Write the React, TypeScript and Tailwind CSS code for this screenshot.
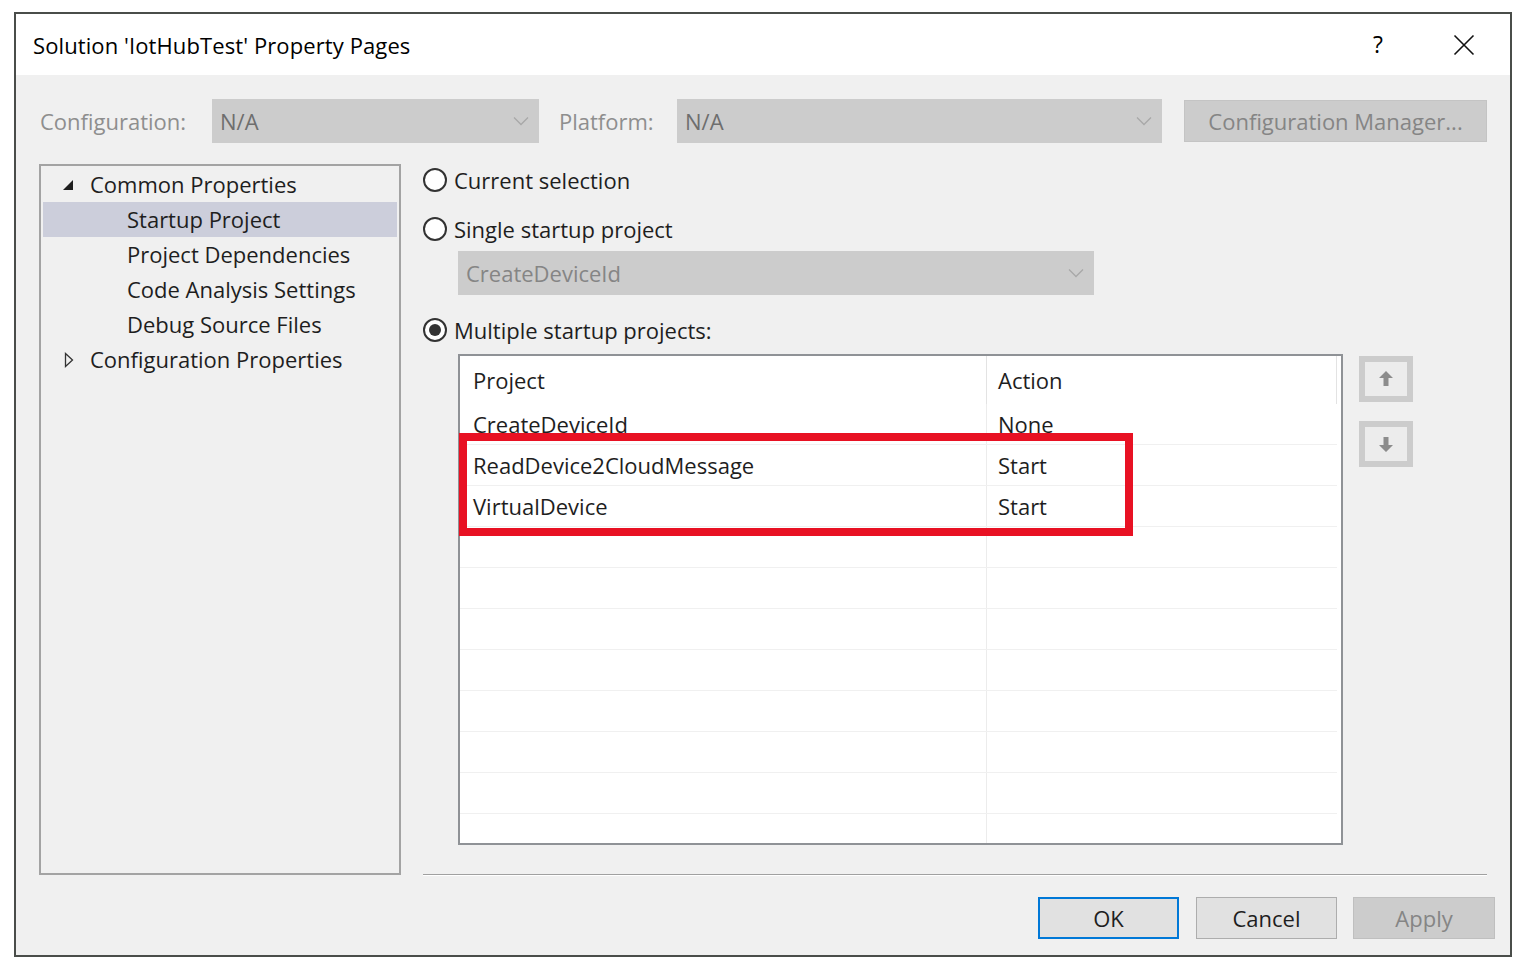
import React from "react";

const font = { fontFamily: '"Open Sans", "Noto Sans", sans-serif' };

function Chevron() {
  return (
    <svg width="16" height="10" viewBox="0 0 16 10" className="shrink-0">
      <path d="M1 1.5 L8 8.5 L15 1.5" fill="none" stroke="#a8a8a8" strokeWidth="1.3" />
    </svg>
  );
}

function Radio({ checked }: { checked?: boolean }) {
  return (
    <div className="w-[24px] h-[24px] rounded-full border-[2px] border-[#333333] bg-white flex items-center justify-center shrink-0">
      {checked && <div className="w-[12px] h-[12px] rounded-full bg-[#333333]" />}
    </div>
  );
}

function Arrow({ up }: { up?: boolean }) {
  return (
    <svg width="16" height="18" viewBox="0 0 16 18">
      {up ? (
        <path d="M8 1 L15 8 H10.5 V16 H5.5 V8 H1 Z" fill="#8c8c8c" />
      ) : (
        <path d="M8 17 L15 10 H10.5 V2 H5.5 V10 H1 Z" fill="#8c8c8c" />
      )}
    </svg>
  );
}

export default function App() {
  const rows: [string, string][] = [
    ["CreateDeviceId", "None"],
    ["ReadDevice2CloudMessage", "Start"],
    ["VirtualDevice", "Start"],
    ["", ""],
    ["", ""],
    ["", ""],
    ["", ""],
    ["", ""],
    ["", ""],
    ["", ""],
    ["", ""],
  ];
  return (
    <div className="w-[1524px] h-[968px] bg-white pl-[14px] pt-[12px] text-[#1b1b1b]" style={font}>
      <div className="w-[1498px] h-[945px] border-2 border-[#4a4d4a] flex flex-col">
        {/* title bar */}
        <div className="h-[61px] bg-white flex items-center pl-[17px] shrink-0">
          <div className="text-[22px] text-black tracking-[0.1px] mt-[1px]">Solution 'IotHubTest' Property Pages</div>
          <div className="ml-auto flex items-center">
            <div className="text-[23px] text-black mr-[70px]">?</div>
            <svg width="22" height="22" viewBox="0 0 22 22" className="mr-[35px]">
              <path d="M1.5 1.5 L20.5 20.5 M20.5 1.5 L1.5 20.5" stroke="#111" strokeWidth="1.6" />
            </svg>
          </div>
        </div>
        {/* body */}
        <div className="flex-1 bg-[#f0f0f0] flex flex-col pl-[23px] pr-[15px]">
          {/* config row */}
          <div className="mt-[24px] h-[44px] flex items-center mr-[8px] text-[22px]">
            <div className="w-[173px] pl-[1px] text-[#8e8e8e]">Configuration:</div>
            <div className="w-[327px] h-[44px] bg-[#cccccc] flex items-center pl-[8px] pr-[10px] text-[#6e6e6e]">
              <span>N/A</span>
              <span className="ml-auto"><Chevron /></span>
            </div>
            <div className="ml-[20px] w-[118px] text-[#8e8e8e]">Platform:</div>
            <div className="w-[485px] h-[44px] bg-[#cccccc] flex items-center pl-[8px] pr-[10px] text-[#6e6e6e]">
              <span>N/A</span>
              <span className="ml-auto"><Chevron /></span>
            </div>
            <div className="ml-[22px] w-[303px] h-[42px] bg-[#cccccc] border border-[#c4c4c4] flex items-center justify-center text-[#858585]">
              Configuration Manager...
            </div>
          </div>
          {/* main row */}
          <div className="mt-[21px] h-[712px] flex mr-[8px]">
            {/* tree */}
            <div className="w-[362px] h-[711px] border-2 border-[#a3a3a3] bg-[#f0f0f0] pt-[1px] px-[2px] text-[22px] text-[#1e1e1e]">
              <div className="h-[35px] flex items-center relative">
                <svg width="12" height="12" viewBox="0 0 12 12" className="absolute left-[19px] top-[12px]">
                  <path d="M11 1 L11 11 L1 11 Z" fill="#1e1e1e" />
                </svg>
                <span className="pl-[47px]">Common Properties</span>
              </div>
              <div className="h-[35px] flex items-center bg-[#cccedb]">
                <span className="pl-[84px]">Startup Project</span>
              </div>
              <div className="h-[35px] flex items-center">
                <span className="pl-[84px]">Project Dependencies</span>
              </div>
              <div className="h-[35px] flex items-center">
                <span className="pl-[84px]">Code Analysis Settings</span>
              </div>
              <div className="h-[35px] flex items-center">
                <span className="pl-[84px]">Debug Source Files</span>
              </div>
              <div className="h-[35px] flex items-center relative">
                <svg width="10" height="16" viewBox="0 0 10 16" className="absolute left-[21px] top-[10px]">
                  <path d="M1.5 1.5 L8.5 8 L1.5 14.5 Z" fill="none" stroke="#333" strokeWidth="1.3" />
                </svg>
                <span className="pl-[47px]">Configuration Properties</span>
              </div>
            </div>
            {/* right column */}
            <div className="ml-[22px] flex-1 flex flex-col text-[22px] text-[#1e1e1e]">
              <div className="h-[32px] flex items-center">
                <Radio />
                <span className="ml-[7px]">Current selection</span>
              </div>
              <div className="mt-[17px] h-[32px] flex items-center">
                <Radio />
                <span className="ml-[7px]">Single startup project</span>
              </div>
              <div className="mt-[6px] ml-[35px] w-[636px] h-[44px] bg-[#cccccc] flex items-center pl-[8px] pr-[10px] text-[#858585]">
                <span>CreateDeviceId</span>
                <span className="ml-auto"><Chevron /></span>
              </div>
              <div className="mt-[19px] h-[32px] flex items-center">
                <Radio checked />
                <span className="ml-[7px]">Multiple startup projects:</span>
              </div>
              <div className="mt-[8px] flex">
                <div className="ml-[35px] w-[885px] h-[491px] border-2 border-[#8f9296] bg-white relative overflow-visible">
                  <div className="w-full h-full overflow-hidden">
                    <div className="h-[48px] flex">
                      <div className="w-[527px] h-full flex items-center pl-[13px] border-r border-[#e3e3e3]">Project</div>
                      <div className="w-[350px] h-full flex items-center pl-[11px] border-r border-[#e3e3e3]">Action</div>
                    </div>
                    {rows.map((r, i) => (
                      <div key={i} className="h-[41px] flex border-b border-[#f0f0f0] w-[877px]">
                        <div className="w-[527px] h-full flex items-center pl-[13px] border-r border-[#ececec]">{r[0]}</div>
                        <div className="w-[350px] h-full flex items-center pl-[11px]">{r[1]}</div>
                      </div>
                    ))}
                  </div>
                  <div className="absolute left-[-1px] top-[77px] w-[674px] h-[103px] border-[8px] border-[#e81123]" />
                </div>
                <div className="ml-[16px] flex flex-col">
                  <div className="mt-[2px] w-[54px] h-[46px] bg-[#cccccc] p-[6px]">
                    <div className="w-full h-full bg-[#ececec] flex items-center justify-center"><Arrow up /></div>
                  </div>
                  <div className="mt-[19px] w-[54px] h-[46px] bg-[#cccccc] p-[6px]">
                    <div className="w-full h-full bg-[#ececec] flex items-center justify-center"><Arrow /></div>
                  </div>
                </div>
              </div>
              <div className="mt-auto h-[2px] border-t border-[#a0a0a0] border-b border-b-white" />
            </div>
          </div>
          {/* buttons */}
          <div className="mt-[21px] flex justify-end text-[22px]">
            <div className="w-[141px] h-[42px] bg-[#e1e1e1] border-2 border-[#0078d7] flex items-center justify-center text-[#1e1e1e]">OK</div>
            <div className="ml-[17px] w-[141px] h-[42px] bg-[#e1e1e1] border border-[#adadad] flex items-center justify-center text-[#1e1e1e]">Cancel</div>
            <div className="ml-[16px] w-[142px] h-[42px] bg-[#cccccc] border border-[#bfbfbf] flex items-center justify-center text-[#858585]">Apply</div>
          </div>
        </div>
      </div>
    </div>
  );
}
